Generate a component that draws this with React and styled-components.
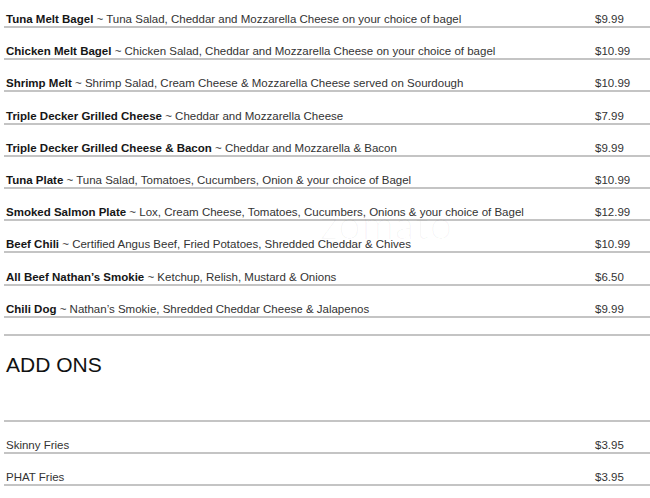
import React from "react";
import styled, { createGlobalStyle } from "styled-components";

const Global = createGlobalStyle`
  html, body { margin: 0; padding: 0; background: #fff; }
  body { font-family: "Liberation Sans", Arial, sans-serif; width: 650px; height: 498px; overflow: hidden; }
`;

const Page = styled.div`
  position: relative;
  padding-left: 4px;
  overflow: hidden;
`;

const List = styled.div`
  display: flex;
  flex-direction: column;
  & > *:first-child { height: 28px; }
`;

const Row = styled.div`
  display: flex;
  align-items: flex-end;
  box-sizing: border-box;
  height: ${(p) => p.$h || 32.2}px;
  padding: 0 0 ${(p) => p.$pb ?? 0}px 2px;
  border-bottom: 2px solid #c4c4c4;
  font-size: 11.5px;
  line-height: 13px;
  color: #333;
`;

const Desc = styled.div`
  width: 589px;
  flex: none;
  white-space: nowrap;
`;

const Name = styled.b`
  font-weight: 700;
  color: #161616;
`;

const Price = styled.div`
  color: #333;
  white-space: nowrap;
`;

const Spacer = styled.div`
  height: 16px;
  border-bottom: 2px solid #c4c4c4;
`;

const Heading = styled.h2`
  margin: 0;
  padding: 17px 0 0 2px;
  height: 86px;
  box-sizing: border-box;
  font-weight: 400;
  font-size: 21px;
  line-height: 24px;
  color: #111;
  border-bottom: 2px solid #c4c4c4;
`;

const Watermark = styled.div`
  position: absolute;
  left: 320px;
  top: 200px;
  font-family: Lato, sans-serif;
  font-weight: 300;
  font-size: 40px;
  letter-spacing: 1px;
  color: rgba(0, 0, 0, 0.03);
  pointer-events: none;
`;

const items = [
  ["Tuna Melt Bagel", " ~ Tuna Salad, Cheddar and Mozzarella Cheese on your choice of bagel", "$9.99"],
  ["Chicken Melt Bagel", " ~ Chicken Salad, Cheddar and Mozzarella Cheese on your choice of bagel", "$10.99"],
  ["Shrimp Melt", " ~ Shrimp Salad, Cream Cheese & Mozzarella Cheese served on Sourdough", "$10.99"],
  ["Triple Decker Grilled Cheese", " ~ Cheddar and Mozzarella Cheese", "$7.99"],
  ["Triple Decker Grilled Cheese & Bacon", " ~ Cheddar and Mozzarella & Bacon", "$9.99"],
  ["Tuna Plate", " ~ Tuna Salad, Tomatoes, Cucumbers, Onion & your choice of Bagel", "$10.99"],
  ["Smoked Salmon Plate", " ~ Lox, Cream Cheese, Tomatoes, Cucumbers, Onions & your choice of Bagel", "$12.99"],
  ["Beef Chili", " ~ Certified Angus Beef, Fried Potatoes, Shredded Cheddar & Chives", "$10.99"],
  ["All Beef Nathan\u2019s Smokie", " ~  Ketchup, Relish, Mustard & Onions", "$6.50"],
  ["Chili Dog", " ~ Nathan\u2019s Smokie, Shredded Cheddar Cheese & Jalapenos", "$9.99"],
];

const addOns = [
  ["Skinny Fries", "$3.95"],
  ["PHAT Fries", "$3.95"],
];

export default function App() {
  return (
    <Page>
      <Global />
      <List>
        {items.map(([n, d, p]) => (
          <Row key={n}>
            <Desc>
              <Name>{n}</Name>
              {d}
            </Desc>
            <Price>{p}</Price>
          </Row>
        ))}
      </List>
      <Spacer />
      <Heading>ADD ONS</Heading>
      {addOns.map(([n, p]) => (
        <Row key={n} $h={32}>
          <Desc>{n}</Desc>
          <Price>{p}</Price>
        </Row>
      ))}
      <Watermark>zomato</Watermark>
    </Page>
  );
}
